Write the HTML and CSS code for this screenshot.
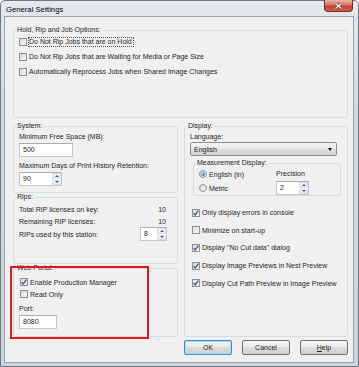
FILE: index.html
```html
<!DOCTYPE html>
<html lang="en">
<head>
  <meta charset="UTF-8">
  <title>General Settings</title>
  <link rel="stylesheet" href="styles.css">
</head>
<body>

  <div class="window">
    <div class="titlebar">
      <span class="title">General Settings</span>
      <span class="close-btn">
        <svg width="11" height="8" viewBox="0 0 11 8">
          <path d="M2.5 1.5 L8.5 6.5 M8.5 1.5 L2.5 6.5" stroke="#5a1f17" stroke-width="2.6" fill="none"/>
          <path d="M2.5 1.5 L8.5 6.5 M8.5 1.5 L2.5 6.5" stroke="#fff" stroke-width="1.5" fill="none"/>
        </svg>
      </span>
    </div>

    <div class="client">
      <!-- Opções de hold / rip -->
      <fieldset class="group hold">
        <legend>Hold, Rip and Job Options:</legend>
        <div class="group-body">
          <div class="check-row"><span class="cb"></span><span class="focus">Do Not Rip Jobs that are on Hold</span></div>
          <div class="check-row"><span class="cb"></span><span>Do Not Rip Jobs that are Waiting for Media or Page Size</span></div>
          <div class="check-row"><span class="cb"></span><span>Automatically Reprocess Jobs when Shared Image Changes</span></div>
        </div>
      </fieldset>

      <div class="columns">
        <div class="col-left">
          <fieldset class="group system">
            <legend>System:</legend>
            <div class="group-body">
              <div class="field-label">Minimum Free Space (MB):</div>
              <div class="textbox wide">500</div>
              <div class="field-label gap">Maximum Days of Print History Retention:</div>
              <div class="spin days">
                <span class="spin-value">90</span>
                <span class="spin-btns"><span class="up"></span><span class="down"></span></span>
              </div>
            </div>
          </fieldset>

          <fieldset class="group rips">
            <legend>Rips:</legend>
            <div class="group-body">
              <div class="info-row"><span>Total RIP licenses on key:</span><span class="num">10</span></div>
              <div class="info-row"><span>Remaining RIP licenses:</span><span class="num">10</span></div>
              <div class="info-row spin-row">
                <span>RIPs used by this station:</span>
                <div class="spin rips-spin">
                  <span class="spin-value">8</span>
                  <span class="spin-btns"><span class="up"></span><span class="down"></span></span>
                </div>
              </div>
            </div>
          </fieldset>

          <fieldset class="group portal">
            <legend>Web Portal:</legend>
            <div class="group-body">
              <div class="check-row small">
                <span class="cb"><svg width="8" height="8" viewBox="0 0 8 8"><path d="M1.6 4.1 L3.2 5.9 L6.4 1.6" stroke="#3e5488" stroke-width="1.3" fill="none"/></svg></span>
                <span>Enable Production Manager</span>
              </div>
              <div class="check-row small"><span class="cb"></span><span>Read Only</span></div>
              <div class="field-label port">Port:</div>
              <div class="textbox port-box">8080</div>
            </div>
          </fieldset>
        </div>

        <fieldset class="group display">
          <legend>Display:</legend>
          <div class="group-body">
            <div class="field-label lang">Language:</div>
            <div class="dropdown"><span>English</span><span class="arrow"></span></div>

            <fieldset class="group measure">
              <legend>Measurement Display:</legend>
              <div class="group-body measure-body">
                <div class="radio-col">
                  <div class="radio-row"><span class="radio checked"></span><span>English (in)</span></div>
                  <div class="radio-row second"><span class="radio"></span><span>Metric</span></div>
                </div>
                <div class="precision-col">
                  <div class="field-label">Precision</div>
                  <div class="spin precision">
                    <span class="spin-value">2</span>
                    <span class="spin-btns"><span class="up"></span><span class="down"></span></span>
                  </div>
                </div>
              </div>
            </fieldset>

            <div class="display-checks">
              <div class="check-row disp">
                <span class="cb"><svg width="8" height="8" viewBox="0 0 8 8"><path d="M1.6 4.1 L3.2 5.9 L6.4 1.6" stroke="#3e5488" stroke-width="1.3" fill="none"/></svg></span>
                <span>Only display errors in console</span>
              </div>
              <div class="check-row disp"><span class="cb"></span><span>Minimize on start-up</span></div>
              <div class="check-row disp">
                <span class="cb"><svg width="8" height="8" viewBox="0 0 8 8"><path d="M1.6 4.1 L3.2 5.9 L6.4 1.6" stroke="#3e5488" stroke-width="1.3" fill="none"/></svg></span>
                <span>Display "No Cut data" dialog</span>
              </div>
              <div class="check-row disp">
                <span class="cb"><svg width="8" height="8" viewBox="0 0 8 8"><path d="M1.6 4.1 L3.2 5.9 L6.4 1.6" stroke="#3e5488" stroke-width="1.3" fill="none"/></svg></span>
                <span>Display Image Previews in Nest Preview</span>
              </div>
              <div class="check-row disp">
                <span class="cb"><svg width="8" height="8" viewBox="0 0 8 8"><path d="M1.6 4.1 L3.2 5.9 L6.4 1.6" stroke="#3e5488" stroke-width="1.3" fill="none"/></svg></span>
                <span>Display Cut Path Preview in Image Preview</span>
              </div>
            </div>
          </div>
        </fieldset>
      </div>

      <div class="buttons">
        <button class="btn default">OK</button>
        <button class="btn">Cancel</button>
        <button class="btn"><u>H</u>elp</button>
      </div>
    </div>

    <!-- destaque vermelho -->
    <div class="callout"></div>
  </div>

</body>
</html>
```

FILE: styles.css
```css
/* Base */
* {
  box-sizing: border-box;
}

body {
  margin: 0;
  background: #fff;
  font-family: "Liberation Sans", Arial, sans-serif;
  font-size: 7px;
  color: #1e1e1e;
}

/* Janela */
.window {
  position: relative;
  width: 359px;
  height: 367px;
  border: 1px solid #6e7885;
  border-radius: 5px 5px 0 0;
  background: linear-gradient(#e4e9ef, #d3dae2 30%, #cdd4dc);
  padding: 0 4px 3px 3px;
  display: flex;
  flex-direction: column;
}

.titlebar {
  height: 15px;
  display: flex;
  justify-content: space-between;
  align-items: flex-start;
  padding-left: 2px;
}

.title {
  font-size: 7.7px;
  line-height: 15px;
  padding-top: 1px;
  color: #000;
}

.close-btn {
  width: 29px;
  height: 12px;
  margin-top: -1px;
  margin-right: 1px;
  border: 1px solid #7a2b20;
  border-top: none;
  border-radius: 0 0 4px 4px;
  background: linear-gradient(#eab2a4, #d77a66 45%, #c2432f 55%, #d46148);
  display: flex;
  align-items: center;
  justify-content: center;
}

.client {
  flex: 1;
  background: #f0f0f0;
  border: 1px solid #98a3af;
  padding: 9px 5px 0 8px;
  display: flex;
  flex-direction: column;
}

/* Grupos */
fieldset.group {
  margin: 0;
  padding: 0;
  min-width: 0;
  border: 1px solid #d5dce2;
  border-radius: 3px;
}

legend {
  margin-left: 2px;
  padding: 0 1px;
  line-height: 8px;
  font-size: 7px;
}

.hold .group-body {
  padding: 0 6px 38px 5px;
}

.check-row {
  display: flex;
  align-items: center;
  gap: 2px;
  height: 15px;
  white-space: nowrap;
}

.check-row.small {
  height: 12px;
}

.check-row.disp {
  height: 17.6px;
}

.cb {
  width: 8px;
  height: 8px;
  flex: none;
  border: 1px solid #8e8f8f;
  background: linear-gradient(135deg, #d9dadb, #f6f6f6);
  display: flex;
  align-items: center;
  justify-content: center;
}

.cb svg {
  display: block;
  margin: -1px;
}

.focus {
  border: 1px dotted #555;
  padding-right: 1px;
  margin-left: -1px;
  line-height: 8px;
}

.columns {
  display: flex;
  gap: 6px;
  margin-top: 4px;
}

.col-left {
  width: 165px;
  display: flex;
  flex-direction: column;
}

/* Sistema */
.system .group-body {
  padding: 1px 5px 6px 5px;
}

.field-label {
  line-height: 12px;
  height: 12px;
  white-space: nowrap;
}

.field-label.gap {
  margin-top: 2px;
  line-height: 13px;
  height: 13px;
}

.textbox {
  height: 14px;
  background: #fff;
  border: 1px solid #c3c7cd;
  border-top-color: #a9adb4;
  padding-left: 3px;
  line-height: 12px;
}

.textbox.wide {
  width: 54px;
}

.spin {
  display: flex;
  height: 14px;
  background: #fff;
  border: 1px solid #c3c7cd;
  border-top-color: #a9adb4;
}

.spin-value {
  flex: 1;
  padding-left: 3px;
  line-height: 12px;
}

.spin-btns {
  width: 9px;
  display: flex;
  flex-direction: column;
  gap: 1px;
}

.spin-btns span {
  flex: 1;
  border: 1px solid #d8dbe0;
  border-radius: 1px;
  background: linear-gradient(#f6f7f8, #e4e7ea);
  display: flex;
  align-items: center;
  justify-content: center;
}

.spin-btns .up::before,
.spin-btns .down::before {
  content: "";
  border-left: 2px solid transparent;
  border-right: 2px solid transparent;
}

.spin-btns .up::before {
  border-bottom: 2px solid #4d6185;
}

.spin-btns .down::before {
  border-top: 2px solid #4d6185;
}

.spin.days {
  width: 43px;
}

/* Rips */
.rips {
  margin-top: 2px;
}

.rips .group-body {
  padding: 2px 10px 22px 5px;
}

.info-row {
  display: flex;
  justify-content: space-between;
  align-items: center;
  height: 12px;
}

.info-row.spin-row {
  height: 14px;
}

.num {
  padding-right: 1px;
}

.spin.rips-spin {
  width: 27px;
}

/* Portal */
.portal {
  margin-top: 6px;
}

.portal .group-body {
  padding: 4px 5px 7px 5px;
}

.portal .check-row .cb {
  margin-left: 1px;
}

.field-label.port {
  margin-top: 3px;
}

.textbox.port-box {
  width: 38px;
}

/* Exibição */
.display {
  width: 164px;
  margin-bottom: 2px;
}

.display .group-body {
  padding: 1px 0 0 5px;
}

.field-label.lang {
  line-height: 11px;
  height: 11px;
}

.dropdown {
  width: 147px;
  height: 14px;
  border: 1px solid #8a8f96;
  border-radius: 2px;
  background: linear-gradient(#f3f3f3, #ebebeb 45%, #dedede 50%, #d2d2d2);
  display: flex;
  align-items: center;
  justify-content: space-between;
  padding: 0 4px 0 3px;
}

.arrow {
  border-left: 2.5px solid transparent;
  border-right: 2.5px solid transparent;
  border-top: 3px solid #111;
}

fieldset.measure {
  width: 148px;
  margin: 3px 0 0 3px;
}

.measure-body {
  display: flex;
  padding: 5px 0 2px 7px;
}

.radio-col {
  width: 77px;
}

.radio-row {
  display: flex;
  align-items: center;
  gap: 2px;
  height: 12px;
}

.radio-row.second {
  margin-top: 2px;
}

.radio {
  width: 8px;
  height: 8px;
  border-radius: 50%;
  border: 1px solid #8e8f8f;
  background: linear-gradient(135deg, #d6d7d8, #f7f7f7);
  display: flex;
  align-items: center;
  justify-content: center;
}

.radio.checked::after {
  content: "";
  width: 4px;
  height: 4px;
  border-radius: 50%;
  background: radial-gradient(circle at 35% 35%, #a9dcf8, #2a77b9 70%, #1b4f85);
}

.spin.precision {
  width: 33px;
  margin-top: 1px;
}

.display-checks {
  margin-top: 8px;
  margin-left: 2px;
}

/* Botões */
.buttons {
  display: flex;
  justify-content: flex-end;
  gap: 10px;
  margin-top: 3px;
}

.btn {
  width: 48px;
  height: 15px;
  padding: 0;
  font-family: inherit;
  font-size: 7px;
  color: #1e1e1e;
  border: 1px solid #707070;
  border-radius: 2px;
  background: linear-gradient(#f3f3f3, #ebebeb 45%, #dddddd 50%, #cfcfcf);
}

.btn.default {
  border-color: #3c8ccc;
  box-shadow: inset 0 0 0 1px #9ee0fa;
}

/* Destaque */
.callout {
  position: absolute;
  left: 9px;
  top: 265px;
  width: 139px;
  height: 73px;
  border: 2px solid #e3161e;
}
```
